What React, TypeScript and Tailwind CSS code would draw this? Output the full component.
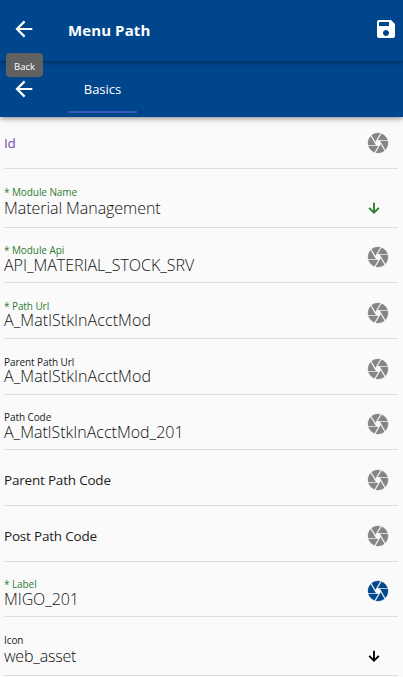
import { MdSave } from "react-icons/md";

type Field = {
  label: string;
  value?: string;
  labelClass: string;
  valueClass?: string;
  rowClass: string;
  icon: "camera" | "arrow";
  iconClass: string;
};

const fields: Field[] = [
  { label: "Id", labelClass: "text-[#7a4ab0]", rowClass: "h-[52px]", icon: "camera", iconClass: "text-[#858585]" },
  { label: "* Module Name", labelClass: "text-[#2e7d32]", value: "Material Management", valueClass: "pb-[9px] tracking-[-0.05px]", rowClass: "h-[59px]", icon: "arrow", iconClass: "text-[#2e7d32]" },
  { label: "* Module Api", labelClass: "-mb-px text-[#2e7d32]", value: "API_MATERIAL_STOCK_SRV", valueClass: "pb-[7px] tracking-[-0.03px]", rowClass: "h-[55px]", icon: "camera", iconClass: "text-[#858585]" },
  { label: "* Path Url", labelClass: "-mb-0.5 text-[#2e7d32]", value: "A_MatlStkInAcctMod", valueClass: "pb-[8px] tracking-[0.08px]", rowClass: "h-[56px]", icon: "camera", iconClass: "text-[#858585]" },
  { label: "Parent Path Url", labelClass: "-mb-0.5 text-[#222]", value: "A_MatlStkInAcctMod", valueClass: "pb-[8px] tracking-[0.08px]", rowClass: "h-[56px]", icon: "camera", iconClass: "text-[#858585]" },
  { label: "Path Code", labelClass: "-mb-px text-[#222]", value: "A_MatlStkInAcctMod_201", valueClass: "pb-[7px]", rowClass: "h-[55px]", icon: "camera", iconClass: "text-[#858585]" },
  { label: "Parent Path Code", labelClass: "text-[#222]", rowClass: "h-[56px]", icon: "camera", iconClass: "text-[#858585]" },
  { label: "Post Path Code", labelClass: "text-[#222]", rowClass: "h-[56px]", icon: "camera", iconClass: "text-[#858585]" },
  { label: "* Label", labelClass: "-mb-px text-[#2e7d32]", value: "MIGO_201", valueClass: "pb-[7px] tracking-[-0.1px]", rowClass: "h-[55px]", icon: "camera", iconClass: "text-[#00468c]" },
  { label: "Icon", labelClass: "text-[#222]", value: "web_asset", valueClass: "pb-[9px] tracking-[-0.2px]", rowClass: "h-[59px]", icon: "arrow", iconClass: "text-black" },
];

function BackArrow({ className = "" }: { className?: string }) {
  return (
    <svg viewBox="0 0 24 24" className={`size-6 shrink-0 fill-none stroke-current stroke-[2.2] ${className}`}>
      <path d="M20.3 12H5.3M12.6 4.4L5 12l7.6 7.6" />
    </svg>
  );
}

function DownArrow({ className = "" }: { className?: string }) {
  return (
    <svg viewBox="0 0 24 24" className={`size-4 shrink-0 fill-none stroke-current stroke-[2.8] ${className}`}>
      <path d="M12 4v15M4.7 11.7L12 19l7.3-7.3" />
    </svg>
  );
}

function Shutter({ className = "" }: { className?: string }) {
  return (
    <svg viewBox="0 0 24 24" className={`size-6 shrink-0 fill-current stroke-current stroke-[0.3] ${className}`}>
      <path d="M9.4 10.5l4.77-8.26C13.47 2.09 12.75 2 12 2c-2.4 0-4.6.85-6.32 2.25l3.66 6.35.06-.1zM21.54 9c-.92-2.92-3.15-5.26-6-6.34L11.88 9h9.66zm.26 1h-7.49l.29.5 4.76 8.25C21 16.97 22 14.61 22 12c0-.69-.07-1.35-.2-2zM8.54 12l-3.9-6.75C3.01 7.03 2 9.39 2 12c0 .69.07 1.35.2 2h7.49l-1.15-2zm-6.08 3c.92 2.92 3.15 5.26 6 6.34L12.12 15H2.46zm11.27 0l-3.9 6.76c.7.15 1.42.24 2.17.24 2.4 0 4.6-.85 6.32-2.25l-3.66-6.35-.93 1.6z" />
    </svg>
  );
}

function FieldRow({ field }: { field: Field }) {
  return (
    <div className={`flex shrink-0 items-end justify-between border-b border-[#dedede] ${field.rowClass}`}>
      {field.value ? (
        <div className="flex flex-col whitespace-nowrap">
          <span className={`text-[10px] leading-[14px] tracking-[-0.08px] ${field.labelClass}`}>{field.label}</span>
          <span className={`text-[16px] leading-[19px] font-light text-[#111] ${field.valueClass}`}>{field.value}</span>
        </div>
      ) : (
        <span className={`pb-[15px] text-[13.5px] leading-5 tracking-[-0.2px] ${field.labelClass}`}>{field.label}</span>
      )}
      {field.icon === "camera" ? (
        <Shutter className={`mr-[8px] mb-[13px] ${field.iconClass}`} />
      ) : (
        <DownArrow className={`mr-[16px] mb-[11px] ${field.iconClass}`} />
      )}
    </div>
  );
}

export default function App() {
  return (
    <div className="flex h-[677px] w-[403px] flex-col overflow-hidden bg-[#fafafa] font-['Open_Sans','Noto_Sans',sans-serif]">
      <header className="relative z-20 flex h-[61px] shrink-0 items-center bg-[#00468c] pr-[5px] pb-[3px] pl-3 text-white shadow-[0_1px_5px_rgba(0,0,0,0.45)]">
        <BackArrow />
        <h1 className="ml-8 flex-1 pt-[2px] text-[15px] leading-5 font-bold tracking-[0.1px]">Menu Path</h1>
        <MdSave className="size-6" />
        <div className="absolute top-[53px] left-[6px] flex h-6 w-[37px] items-center justify-center rounded bg-[#616161] pt-[3px] text-[9.5px] leading-none">
          Back
        </div>
      </header>
      <nav className="relative z-10 flex h-14 shrink-0 bg-[#00468c] pl-3 text-white shadow-[0_1px_6px_rgba(0,0,0,0.5)]">
        <BackArrow className="mt-4" />
        <div className="ml-8 flex h-[52px] w-[69px] items-center justify-center border-b-2 border-[#3557b7] pt-[7px] text-[13px]">
          Basics
        </div>
      </nav>
      <main className="flex flex-col pr-[5px] pl-1">
        {fields.map((field) => (
          <FieldRow key={field.label} field={field} />
        ))}
      </main>
    </div>
  );
}
